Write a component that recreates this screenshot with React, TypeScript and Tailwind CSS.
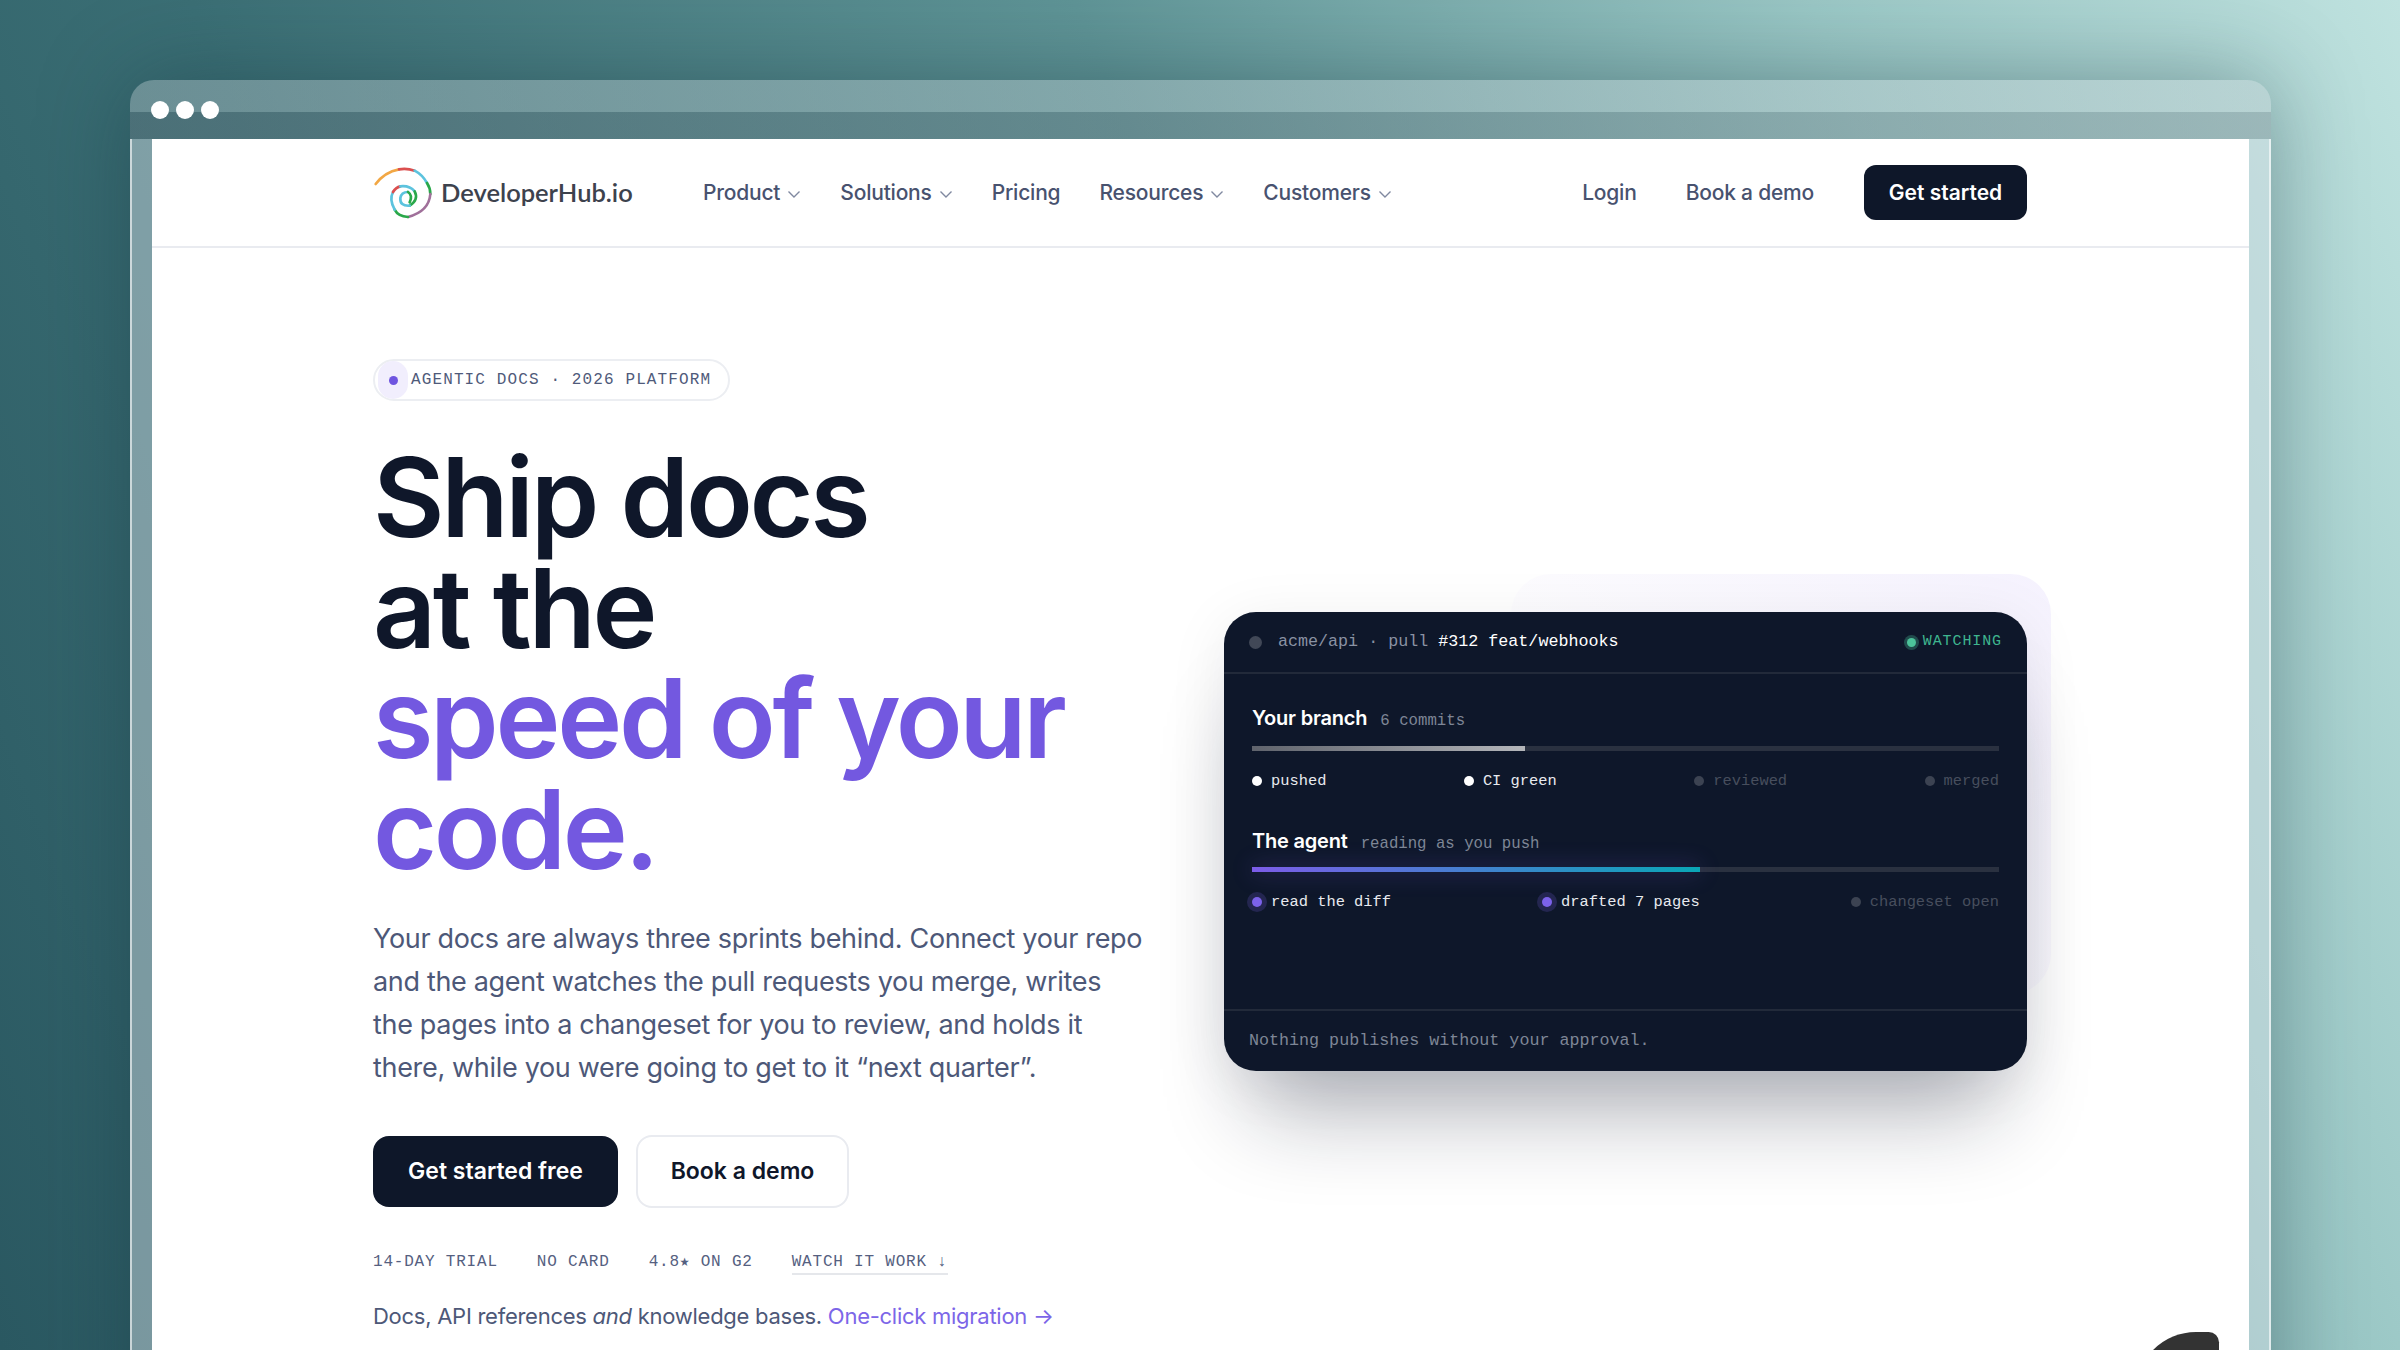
import React from "react";

const sans = "font-['Inter','Liberation_Sans',sans-serif]";
const mono = "font-['Liberation_Mono','DejaVu_Sans_Mono',monospace]";

function Chevron() {
  return (
    <svg width="14" height="9" viewBox="0 0 14 9" fill="none" className="mt-[3px]">
      <path d="M1.5 1.5 7 7l5.500-5.500" stroke="#8089a0" strokeWidth="1.4" />
    </svg>
  );
}

function Logo() {
  const segs: [string, string][] = [
    ["#f2a744", "M48 88Q75 52 118 44"],
    ["#db4f4f", "M118 44Q142 40 165 48"],
    ["#5cc3de", "M165 48Q188 60 202 85"],
    ["#2aa84a", "M202 85Q212 100 212 118"],
    ["#a0709a", "M212 118Q208 170 145 187"],
    ["#2aa84a", "M145 187Q115 185 105 165"],
    ["#5cc3de", "M105 165Q88 135 100 112"],
    ["#db4f4f", "M100 112Q108 98 122 95"],
    ["#5cc3de", "M122 95Q150 92 165 110"],
    ["#2aa84a", "M165 110Q178 135 150 153"],
    ["#5cc3de", "M150 153Q120 155 122 130Q125 112 145 112"],
    ["#2aa84a", "M145 112Q160 122 150 143"],
  ];
  return (
    <svg width="60" height="60" viewBox="40 30 180 170" fill="none" className="shrink-0">
      {segs.map(([c, d], i) => (
        <path key={i} d={d} stroke={c} strokeWidth="8" strokeLinecap="round" />
      ))}
    </svg>
  );
}

function NavLink({ label, chev }: { label: string; chev?: boolean }) {
  return (
    <a className="flex items-center gap-[7px] text-[21px] font-medium text-[#48526f] tracking-[-0.01em]">
      {label}
      {chev && <Chevron />}
    </a>
  );
}

function Step({ label, state }: { label: string; state: "white" | "violet" | "off" }) {
  const dot =
    state === "white"
      ? "bg-white"
      : state === "violet"
        ? "bg-[#7c62ea] ring-[5px] ring-[#7c62ea]/20"
        : "bg-[#3c4352]";
  const text = state === "off" ? "text-[#474e5d]" : "text-[#e8eaef]";
  return (
    <div className="flex items-center gap-[9px]">
      <span className={`w-[10px] h-[10px] rounded-full ${dot} ${state === "white" ? "ml-[0px]" : ""} mt-[-1px]`} />
      <span className={`text-[15.400px] ${text}`}>{label}</span>
    </div>
  );
}

function Meta({ children, u }: { children: React.ReactNode; u?: boolean }) {
  return (
    <span className={u ? "border-b-2 border-[#e5e7eb] pb-[1px]" : ""}>{children}</span>
  );
}

export default function App() {
  return (
    <div className="w-[2400px] h-[1350px] overflow-hidden relative pt-[80px] pl-[130px] bg-[linear-gradient(68deg,#2a5861_0%,#3b6f75_25%,#5f9496_55%,#9ac7c5_80%,#bfe2df_100%)]">
      <div className="w-[2141px] h-[1400px] flex flex-col rounded-t-[24px] shadow-[0_0_90px_rgba(20,50,60,0.4)]">
        <div className="h-[59px] shrink-0 rounded-t-[24px] overflow-hidden bg-[linear-gradient(to_bottom,rgba(190,200,205,0.38)_32px,rgba(110,120,130,0.35)_32px)] pt-[21px] pl-[21px] flex gap-[7px]">
          <span className="w-[18px] h-[18px] rounded-full bg-white" />
          <span className="w-[18px] h-[18px] rounded-full bg-white" />
          <span className="w-[18px] h-[18px] rounded-full bg-white" />
        </div>
        <div className="flex-1 px-[20px] border-x-2 border-white/60 bg-[rgba(215,225,230,0.45)]">
          <div className={`bg-white h-full ${sans}`}>
            <header className="h-[109px] border-b-2 border-[#e9ebf0]">
              <div className="w-[1654px] ml-[221px] h-full flex items-center">
                <div className="flex items-center gap-[8px] w-[330px]">
                  <Logo />
                  <span className="font-['Lato','Open_Sans',sans-serif] font-semibold text-[25.500px] text-[#3d424d]">
                    DeveloperHub.io
                  </span>
                </div>
                <nav className="flex items-center gap-[39px]">
                  <NavLink label="Product" chev />
                  <NavLink label="Solutions" chev />
                  <NavLink label="Pricing" />
                  <NavLink label="Resources" chev />
                  <NavLink label="Customers" chev />
                </nav>
                <div className="ml-auto flex items-center">
                  <NavLink label="Login" />
                  <span className="w-[49px]" />
                  <NavLink label="Book a demo" />
                  <button className="ml-[50px] w-[163px] h-[55px] rounded-[12px] bg-[#0e1729] text-white font-semibold text-[21px]">
                    Get started
                  </button>
                </div>
              </div>
            </header>

            <main className="w-[1654px] ml-[221px] flex justify-between items-start pt-[111px]">
              <div className="w-[790px]">
                <div className="inline-flex items-center h-[42px] w-[357px] rounded-full border-2 border-[#eceef2] pl-[3px]">
                  <span className="w-[30px] h-[38px] rounded-full bg-[#f1eefd] flex items-center justify-center shrink-0">
                    <span className="w-[9px] h-[9px] rounded-full bg-[#6f55e0]" />
                  </span>
                  <span className={`${mono} ml-[3px] text-[16px] tracking-[1.120px] text-[#4f5a7a] whitespace-nowrap`}>
                    AGENTIC DOCS · 2026 PLATFORM
                  </span>
                </div>
                <h1 className="mt-[41px] text-[110px] leading-[110.700px] font-semibold tracking-[-0.03em] text-[#0f172a]">
                  Ship docs
                  <br />
                  at the
                  <br />
                  <span className="text-[#7358e0]">
                    speed of your
                    <br />
                    code.
                  </span>
                </h1>
                <p className="mt-[32px] text-[27px] leading-[43px] text-[#4d5878] tracking-[-0.012em] whitespace-nowrap">
                  Your docs are always three sprints behind. Connect your repo
                  <br />
                  and the agent watches the pull requests you merge, writes
                  <br />
                  the pages into a changeset for you to review, and holds it
                  <br />
                  there, while you were going to get to it “next quarter”.
                </p>
                <div className="mt-[46px] flex items-center gap-[18px]">
                  <button className="w-[245px] h-[71px] rounded-[16px] bg-[#0e1729] text-white font-semibold text-[23px]">
                    Get started free
                  </button>
                  <button className="w-[213px] h-[73px] rounded-[16px] bg-white border-2 border-[#e9ebf0] text-[#0f172a] font-semibold text-[23px]">
                    Book a demo
                  </button>
                </div>
                <div className={`${mono} mt-[44px] flex gap-[39px] text-[16px] tracking-[0.800px] text-[#556080] leading-[20px]`}>
                  <Meta>14-DAY TRIAL</Meta>
                  <Meta>NO CARD</Meta>
                  <Meta>4.8★ ON G2</Meta>
                  <Meta u>WATCH IT WORK ↓</Meta>
                </div>
                <p className="mt-[26px] text-[22px] leading-[30px] text-[#4d5878] tracking-[-0.012em] whitespace-nowrap">
                  Docs, API references <em>and</em> knowledge bases.{" "}
                  <a className="text-[#7c66e8]">One-click migration →</a>
                </p>
              </div>

              <div className="relative mt-[253px] w-[803px]">
                <div className="absolute -top-[38px] -right-[24px] w-[540px] h-[420px] rounded-[40px] bg-[linear-gradient(225deg,#f5f2fe,#ffffff_75%)]" />
                <div className={`relative h-[459px] rounded-[32px] bg-[#0e172a] flex flex-col ${mono} shadow-[0_70px_90px_-30px_rgba(15,23,42,0.32),0_10px_60px_rgba(15,23,42,0.08)]`}>
                  <div className="h-[62px] shrink-0 border-b-2 border-[#222a3a] flex items-center pl-[25px] pr-[25px] text-[16.700px]">
                    <span className="w-[13px] h-[13px] rounded-full bg-[#414857]" />
                    <span className="ml-[16px] text-[#8a92a3]">
                      acme/api · pull <span className="text-white">#312 feat/webhooks</span>
                    </span>
                    <span className="ml-auto w-[9px] h-[9px] rounded-full bg-[#4cc39a] ring-[3px] ring-[#4cc39a]/30" />
                    <span className="ml-[7px] text-[15px] tracking-[0.900px] text-[#3fb58f]">WATCHING</span>
                  </div>
                  <div className="flex-1 px-[28px] pt-[29px]">
                    <div className="flex items-baseline gap-[13px] h-[26px]">
                      <span className={`${sans} text-white font-semibold text-[20px] tracking-[-0.01em]`}>Your branch</span>
                      <span className="text-[15.700px] text-[#7e8696]">6 commits</span>
                    </div>
                    <div className="mt-[17px] h-[5px] bg-[#2a3140]">
                      <div className="h-full w-[273px] bg-[linear-gradient(to_right,#5f636c,#b4b6ba)]" />
                    </div>
                    <div className="mt-[19px] flex justify-between">
                      <Step label="pushed" state="white" />
                      <Step label="CI green" state="white" />
                      <Step label="reviewed" state="off" />
                      <Step label="merged" state="off" />
                    </div>
                    <div className="mt-[33px] flex items-baseline gap-[13px] h-[26px]">
                      <span className={`${sans} text-white font-semibold text-[20px] tracking-[-0.01em]`}>The agent</span>
                      <span className="text-[15.700px] text-[#7e8696]">reading as you push</span>
                    </div>
                    <div className="mt-[15px] h-[5px] bg-[#2a3140]">
                      <div className="h-full w-[448px] bg-[linear-gradient(to_right,#7c5ce8,#0aa6b6)] shadow-[0_0_22px_rgba(124,92,232,0.45)]" />
                    </div>
                    <div className="mt-[19px] flex justify-between">
                      <Step label="read the diff" state="violet" />
                      <Step label="drafted 7 pages" state="violet" />
                      <Step label="changeset open" state="off" />
                    </div>
                  </div>
                  <div className="h-[62px] shrink-0 border-t-2 border-[#222a3a] flex items-center pl-[25px] text-[16.700px] text-[#7e8696]">
                    Nothing publishes without your approval.
                  </div>
                </div>
              </div>
            </main>
          </div>
        </div>
      </div>
      <div className="absolute left-[2136px] top-[1332px] w-[83px] h-[60px] rounded-tl-[70px] rounded-tr-[12px] bg-[#333333]" />
    </div>
  );
}
